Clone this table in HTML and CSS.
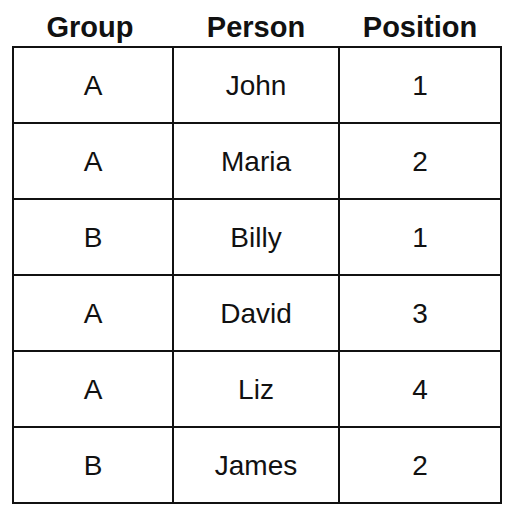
FILE: index.html
```html
<!DOCTYPE html>
<html>
<head>
<meta charset="utf-8">
<link rel="stylesheet" href="styles.css">
</head>
<body>
<div class="wrap">
  <div class="head">
    <div class="hcell hgroup">Group</div>
    <div class="hcell">Person</div>
    <div class="hcell">Position</div>
  </div>
  <div class="grid">
    <div class="cell">A</div><div class="cell">John</div><div class="cell">1</div>
    <div class="cell">A</div><div class="cell">Maria</div><div class="cell">2</div>
    <div class="cell">B</div><div class="cell">Billy</div><div class="cell">1</div>
    <div class="cell">A</div><div class="cell">David</div><div class="cell">3</div>
    <div class="cell">A</div><div class="cell">Liz</div><div class="cell">4</div>
    <div class="cell">B</div><div class="cell">James</div><div class="cell">2</div>
  </div>
</div>
</body>
</html>
```
FILE: styles.css
```css
html, body {
  margin: 0;
  padding: 0;
  background: #ffffff;
}
body {
  font-family: "Liberation Sans", Arial, sans-serif;
  color: #111111;
}
.wrap {
  padding-left: 12px;
  width: 490px;
}
.head {
  display: grid;
  grid-template-columns: 158px 164px 160px;
  column-gap: 2px;
  padding: 8px 2px 0 2px;
  height: 38px;
}
.hcell {
  font-weight: bold;
  font-size: 29px;
  line-height: 38px;
  text-align: center;
}
.hgroup {
  padding-right: 6px;
}
.grid {
  display: grid;
  grid-template-columns: 158px 164px 160px;
  grid-auto-rows: 74px;
  gap: 2px;
  padding: 2px;
  background: #111111;
}
.cell {
  background: #ffffff;
  font-size: 28px;
  line-height: 72px;
  padding-top: 2px;
  text-align: center;
}
```
